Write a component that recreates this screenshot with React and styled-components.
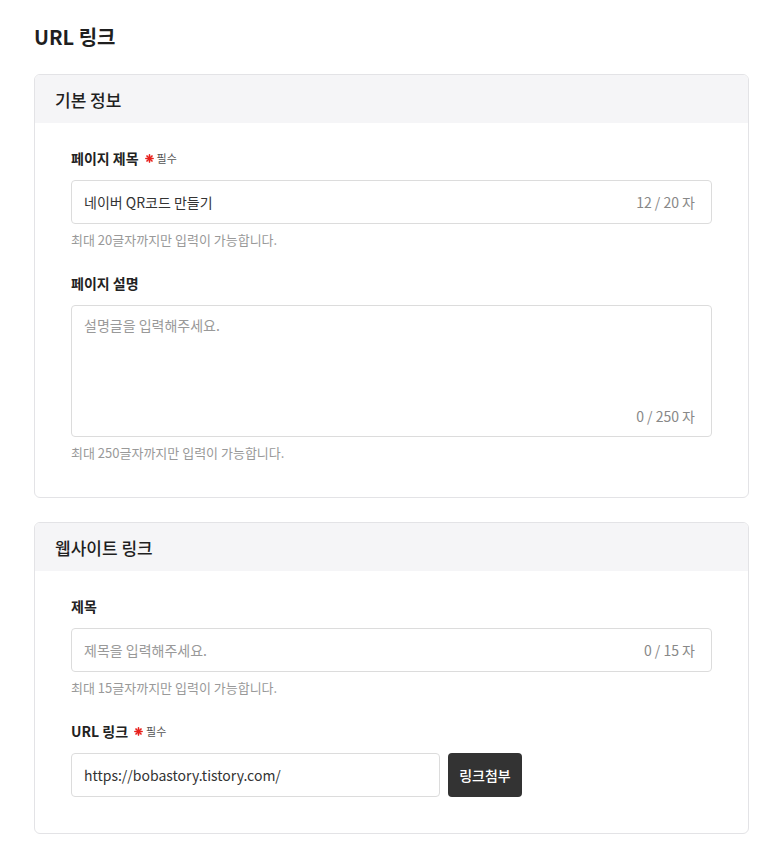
import React from "react";
import styled, { createGlobalStyle } from "styled-components";

const GlobalStyle = createGlobalStyle`
  body {
    margin: 0;
    background: #fff;
    font-family: "Noto Sans CJK KR", "Noto Sans", sans-serif;
    color: #222;
  }
`;

export default function App() {
  return (
    <Page>
      <GlobalStyle />
      <PageTitle>URL 링크</PageTitle>
      <Section title="기본 정보">
        <Field label="페이지 제목" required>
          <InputBox>
            <InputText>네이버 QR코드 만들기</InputText>
            <Counter>12 / 20 자</Counter>
          </InputBox>
          <Help>최대 20글자까지만 입력이 가능합니다.</Help>
        </Field>
        <Field label="페이지 설명">
          <TextArea>
            <InputText placeholder>설명글을 입력해주세요.</InputText>
            <Counter>0 / 250 자</Counter>
          </TextArea>
          <Help>최대 250글자까지만 입력이 가능합니다.</Help>
        </Field>
      </Section>
      <Section title="웹사이트 링크" last>
        <Field label="제목">
          <InputBox>
            <InputText placeholder>제목을 입력해주세요.</InputText>
            <Counter>0 / 15 자</Counter>
          </InputBox>
          <Help>최대 15글자까지만 입력이 가능합니다.</Help>
        </Field>
        <Field label="URL 링크" required>
          <LinkRow>
            <InputBox grow>
              <InputText>https://bobastory.tistory.com/</InputText>
            </InputBox>
            <AttachButton>링크첨부</AttachButton>
          </LinkRow>
        </Field>
      </Section>
    </Page>
  );
}

function Section({ title, last, children }) {
  return (
    <Card>
      <CardHeader>{title}</CardHeader>
      <CardBody last={last}>{children}</CardBody>
    </Card>
  );
}

function Field({ label, required, children }) {
  return (
    <FieldWrapper>
      <Label>
        {label}
        {required && (
          <Required>
            <Asterisk />
            필수
          </Required>
        )}
      </Label>
      {children}
    </FieldWrapper>
  );
}

function Asterisk() {
  return (
    <svg width="9" height="9" viewBox="0 0 10 10">
      <g stroke="#e8211d" strokeWidth="1.8" strokeLinecap="round">
        <line x1="5" y1="1" x2="5" y2="9" />
        <line x1="1" y1="5" x2="9" y2="5" />
        <line x1="2.2" y1="2.2" x2="7.8" y2="7.8" />
        <line x1="7.8" y1="2.2" x2="2.2" y2="7.8" />
      </g>
    </svg>
  );
}

const Page = styled.div`
  padding: 22px 33px 24px 34px;
  display: flex;
  flex-direction: column;
  gap: 24px;
`;

const PageTitle = styled.h1`
  margin: 0;
  font-size: 20px;
  font-weight: 700;
  line-height: 30px;
  color: #1f1f1f;
  margin-bottom: -2px;
`;

const Card = styled.section`
  border: 1px solid #e3e3e6;
  border-radius: 6px;
  overflow: hidden;
  background: #fff;
`;

const CardHeader = styled.div`
  background: #f5f5f7;
  height: 48px;
  display: flex;
  align-items: center;
  padding: 0 20px;
  font-size: 17px;
  font-weight: 500;
  color: #1f1f1f;
`;

const CardBody = styled.div`
  padding: 25px 36px ${(p) => (p.last ? 36 : 35)}px 36px;
  display: flex;
  flex-direction: column;
  gap: 24px;
`;

const FieldWrapper = styled.div`
  display: flex;
  flex-direction: column;
`;

const Label = styled.div`
  display: flex;
  align-items: center;
  font-size: 14px;
  font-weight: 700;
  color: #222;
  line-height: 20px;
  margin-bottom: 12px;
`;

const Required = styled.span`
  display: inline-flex;
  align-items: center;
  gap: 3px;
  margin-left: 6px;
  font-size: 11px;
  font-weight: 400;
  color: #555;
`;

const InputBox = styled.div`
  flex: ${(p) => (p.grow ? 1 : "none")};
  height: 44px;
  box-sizing: border-box;
  border: 1px solid #dcdcdc;
  border-radius: 4px;
  display: flex;
  align-items: center;
  justify-content: space-between;
  padding: 0 16px 0 12px;
  background: #fff;
`;

const TextArea = styled.div`
  height: 132px;
  box-sizing: border-box;
  border: 1px solid #dcdcdc;
  border-radius: 4px;
  display: flex;
  flex-direction: column;
  justify-content: space-between;
  padding: 8px 16px 10px 12px;

  > span:last-child {
    align-self: flex-end;
  }
`;

const InputText = styled.span`
  font-size: 14px;
  line-height: 22px;
  color: ${(p) => (p.placeholder ? "#999" : "#333")};
`;

const Counter = styled.span`
  font-size: 14px;
  line-height: 20px;
  color: #888;
`;

const Help = styled.div`
  font-size: 13px;
  line-height: 18px;
  color: #999;
  margin-top: 7px;
`;

const LinkRow = styled.div`
  display: flex;
  gap: 8px;
  padding-right: 190px;
`;

const AttachButton = styled.button`
  width: 74px;
  height: 44px;
  border: none;
  border-radius: 4px;
  background: #333;
  color: #fff;
  font-family: inherit;
  font-size: 14px;
  font-weight: 500;
  padding: 0;
`;
